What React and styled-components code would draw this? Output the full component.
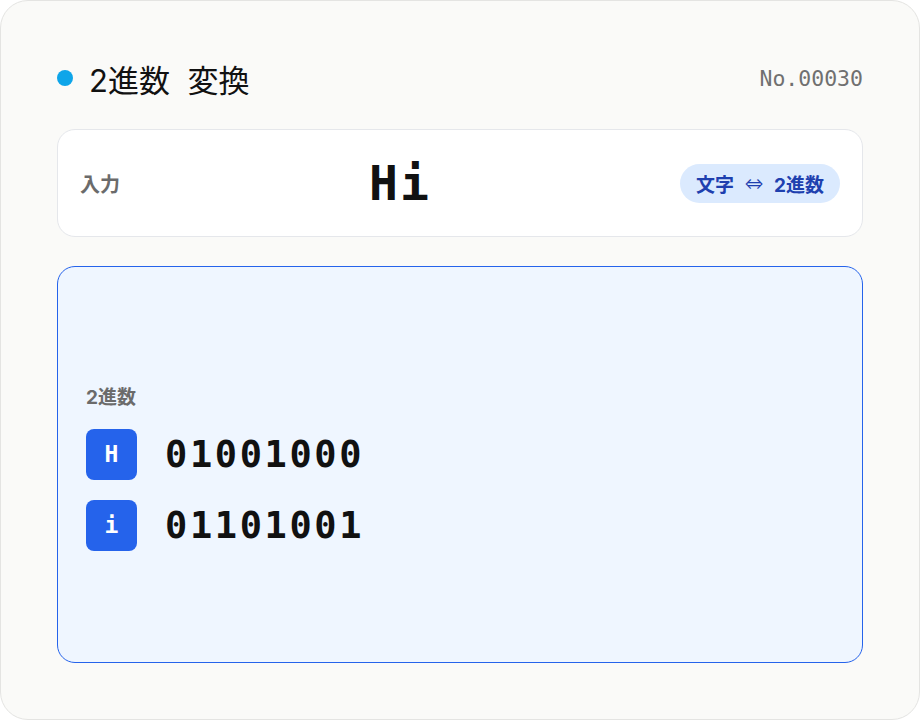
import React from "react"
import styled, { createGlobalStyle } from "styled-components"

const GlobalStyle = createGlobalStyle`
  html, body {
    margin: 0;
    padding: 0;
    background: #ffffff;
  }
  body {
    font-family: Inter, "Noto Sans CJK JP", sans-serif;
  }
`

const MONO = `"DejaVu Sans Mono", monospace`
const CJK = `Inter, "Noto Sans CJK JP", sans-serif`

const Card = styled.div`
  width: 920px;
  height: 720px;
  box-sizing: border-box;
  background: #fafaf8;
  border: 1px solid #e4e4e2;
  border-radius: 28px;
  padding: 59px 56px 56px;
  display: flex;
  flex-direction: column;
`

const Header = styled.header`
  height: 36px;
  display: flex;
  align-items: center;
  justify-content: space-between;
  margin-bottom: 33px;
`

const Title = styled.h1`
  margin: 0;
  display: flex;
  align-items: center;
  gap: 16px;
  font-family: ${CJK};
  font-weight: 400;
  font-size: 31px;
  color: #111111;
  word-spacing: 9px;
`

const Dot = styled.span`
  width: 16px;
  height: 16px;
  border-radius: 50%;
  background: #0ea5e9;
`

const Serial = styled.span`
  font-family: ${MONO};
  font-size: 21.5px;
  color: #707070;
`

const InputCard = styled.section`
  height: 108px;
  box-sizing: border-box;
  background: #ffffff;
  border: 1px solid #e5e7eb;
  border-radius: 18px;
  padding: 0 22px 0 22px;
  display: flex;
  align-items: center;
  margin-bottom: 29px;
`

const Label = styled.span`
  font-family: ${CJK};
  font-weight: 700;
  font-size: 20px;
  color: #6b6b6b;
`

const Value = styled.span`
  flex: 1;
  text-align: center;
  font-family: ${MONO};
  font-weight: 700;
  font-size: 48px;
  letter-spacing: 2px;
  color: #111111;
`

const Pill = styled.span`
  height: 39px;
  padding: 0 16px;
  border-radius: 20px;
  background: #dbeafe;
  color: #1e40af;
  font-family: ${CJK};
  font-weight: 700;
  font-size: 19px;
  display: flex;
  align-items: center;
  gap: 10px;
`

const Arrow = styled.span`
  font-size: 15px;
  font-weight: 400;
`

const Output = styled.section`
  flex: 1;
  box-sizing: border-box;
  background: #eff6ff;
  border: 1px solid #2563eb;
  border-radius: 18px;
  padding: 6px 28px 0;
  display: flex;
  flex-direction: column;
  justify-content: center;
`

const OutLabel = styled(Label)`
  display: block;
  font-size: 19px;
  line-height: 26px;
  margin-bottom: 18px;
`

const Rows = styled.div`
  display: flex;
  flex-direction: column;
  gap: 20px;
`

const Row = styled.div`
  display: flex;
  align-items: center;
  gap: 28px;
`

const Badge = styled.span`
  width: 51px;
  height: 51px;
  border-radius: 8px;
  background: #2563eb;
  color: #ffffff;
  font-family: ${MONO};
  font-weight: 700;
  font-size: 23px;
  display: flex;
  align-items: center;
  justify-content: center;
`

const Bits = styled.span`
  font-family: ${MONO};
  font-weight: 700;
  font-size: 37px;
  letter-spacing: 2.6px;
  color: #111111;
`

const input = "Hi"
const toBinary = (c) => c.charCodeAt(0).toString(2).padStart(8, "0")

const App = () => (
  <>
    <GlobalStyle />
    <Card>
      <Header>
        <Title>
          <Dot />
          2進数 変換
        </Title>
        <Serial>No.00030</Serial>
      </Header>
      <InputCard>
        <Label>入力</Label>
        <Value>{input}</Value>
        <Pill>
          文字 <Arrow>⇔</Arrow> 2進数
        </Pill>
      </InputCard>
      <Output>
        <OutLabel>2進数</OutLabel>
        <Rows>
          {input.split("").map((c) => (
            <Row key={c}>
              <Badge>{c}</Badge>
              <Bits>{toBinary(c)}</Bits>
            </Row>
          ))}
        </Rows>
      </Output>
    </Card>
  </>
)

export default App
